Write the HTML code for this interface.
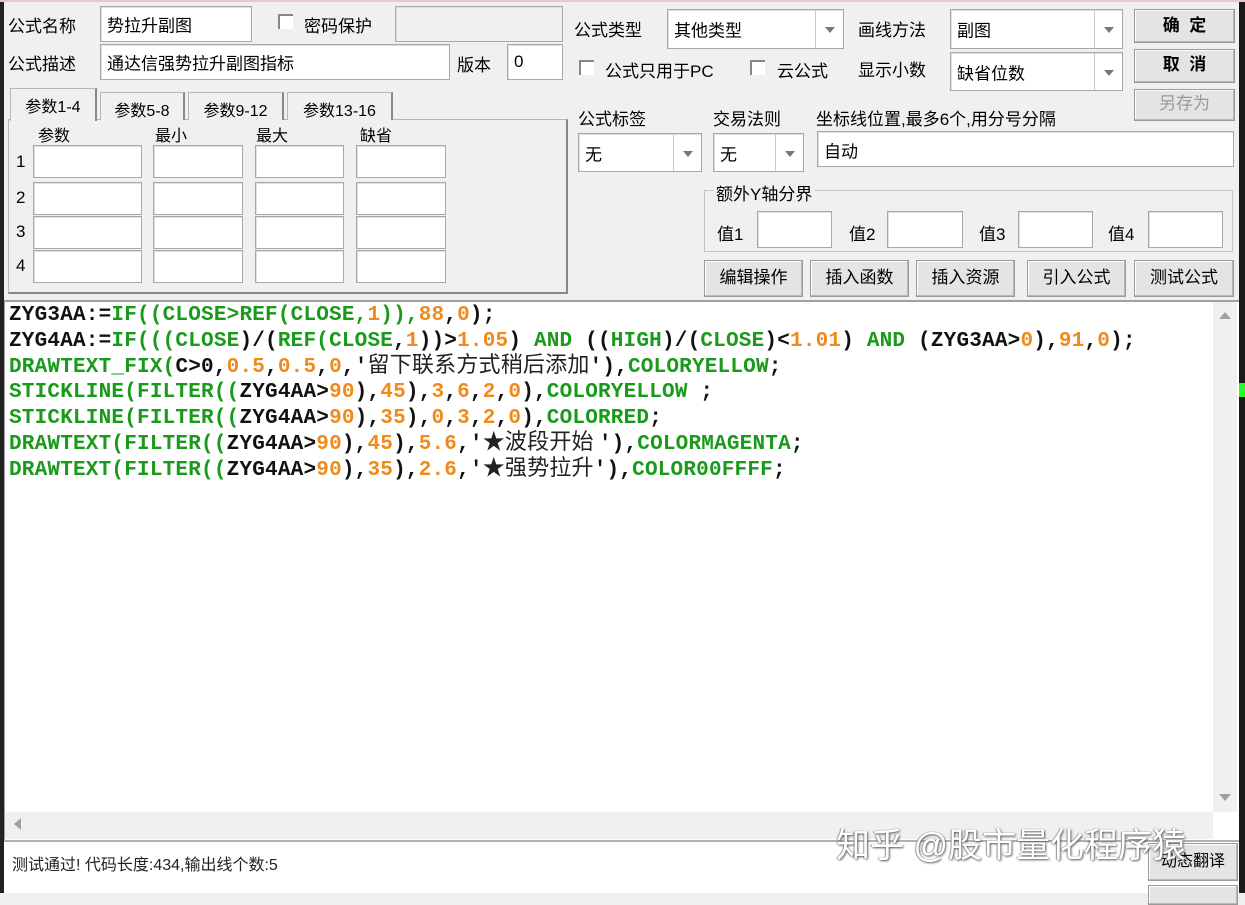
<!DOCTYPE html>
<html><head><meta charset="utf-8">
<style>
*{margin:0;padding:0;box-sizing:border-box}
body{width:1245px;height:893px;background:#f0f0f0;position:relative;overflow:hidden;font-family:"Liberation Sans","Noto Sans CJK SC",sans-serif;font-size:17px;color:#000}
.a{position:absolute;white-space:nowrap}
.in{position:absolute;background:#fff;border:1px solid #a8a8a8;box-shadow:inset 1px 1px 0 #e0e0e0}
.in span{position:absolute;left:6px;top:50%;transform:translateY(-50%);font-size:17px}
.sel .arr{position:absolute;right:0;top:0;bottom:0;width:28px;border-left:1px solid #c8c8c8}
.sel .arr:after{content:"";position:absolute;left:9px;top:50%;margin-top:-2px;border:5px solid transparent;border-top:6px solid #777;border-bottom:0}
.cb{position:absolute;width:15px;height:15px;border-left:2px solid #888;border-top:2px solid #888;background:#fff}
.btn{position:absolute;background:#e4e4e4;border:1px solid #9a9a9a;box-shadow:inset -1px -1px 0 #b8b8b8,inset 1px 1px 0 #fff;text-align:center;font-size:17px}
.tab{position:absolute;top:92px;height:28px;border:1px solid #b8b8b8;border-bottom:none;background:#f0f0f0;font-size:16px;text-align:center;padding-top:4px}
#code{position:absolute;left:9px;top:303px;font-family:"Liberation Mono",monospace;font-weight:bold;font-size:21px;color:#111;white-space:pre;letter-spacing:0.2px}
#code div{height:25.8px;line-height:25.8px}
#code span{line-height:0}
.g{color:#1a9a1a}.o{color:#f08a1a}.c{font-weight:normal;font-family:"Noto Sans CJK SC",sans-serif;font-size:22px;color:#222}
</style></head><body>
<div class="a" style="left:0;top:0;width:4px;height:893px;background:#222"></div>
<div class="a" style="left:1239px;top:0;width:6px;height:893px;background:#1a1a1a"></div>
<div class="a" style="left:1239px;top:383px;width:6px;height:14px;background:#2f2"></div>
<div class="a" style="left:0;top:0;width:1245px;height:2px;background:#e8c8c8"></div>

<div class="a" style="left:8px;top:12px">公式名称</div>
<div class="in" style="left:100px;top:6px;width:152px;height:36px"><span>势拉升副图</span></div>
<div class="cb" style="left:278px;top:14px"></div>
<div class="a" style="left:304px;top:12px">密码保护</div>
<div class="in" style="left:395px;top:6px;width:168px;height:36px;background:#f0f0f0"></div>
<div class="a" style="left:8px;top:50px">公式描述</div>
<div class="in" style="left:100px;top:44px;width:350px;height:36px"><span>通达信强势拉升副图指标</span></div>
<div class="a" style="left:457px;top:51px">版本</div>
<div class="in" style="left:507px;top:44px;width:56px;height:36px"><span>0</span></div>

<div class="a" style="left:8px;top:119px;width:560px;height:175px;border:1px solid #b8b8b8;border-right:2px solid #888;border-bottom:2px solid #888"></div>
<div class="tab" style="left:10px;top:88px;height:33px;width:87px;border-right:2px solid #888">参数1-4</div>
<div class="tab" style="left:100px;width:85px;border-right:2px solid #888">参数5-8</div>
<div class="tab" style="left:188px;width:96px;border-right:2px solid #888">参数9-12</div>
<div class="tab" style="left:287px;width:106px;border-right:2px solid #888">参数13-16</div>
<div class="a" style="left:38px;top:122px;font-size:16px">参数</div>
<div class="a" style="left:155px;top:122px;font-size:16px">最小</div>
<div class="a" style="left:256px;top:122px;font-size:16px">最大</div>
<div class="a" style="left:360px;top:122px;font-size:16px">缺省</div>
<div class="a" style="left:16px;top:152px">1</div>
<div class="a" style="left:16px;top:188px">2</div>
<div class="a" style="left:16px;top:222px">3</div>
<div class="a" style="left:16px;top:256px">4</div>
<div class="in" style="left:33px;top:145px;width:109px;height:33px"></div><div class="in" style="left:153px;top:145px;width:90px;height:33px"></div><div class="in" style="left:255px;top:145px;width:89px;height:33px"></div><div class="in" style="left:356px;top:145px;width:90px;height:33px"></div>
<div class="in" style="left:33px;top:182px;width:109px;height:33px"></div><div class="in" style="left:153px;top:182px;width:90px;height:33px"></div><div class="in" style="left:255px;top:182px;width:89px;height:33px"></div><div class="in" style="left:356px;top:182px;width:90px;height:33px"></div>
<div class="in" style="left:33px;top:216px;width:109px;height:33px"></div><div class="in" style="left:153px;top:216px;width:90px;height:33px"></div><div class="in" style="left:255px;top:216px;width:89px;height:33px"></div><div class="in" style="left:356px;top:216px;width:90px;height:33px"></div>
<div class="in" style="left:33px;top:250px;width:109px;height:33px"></div><div class="in" style="left:153px;top:250px;width:90px;height:33px"></div><div class="in" style="left:255px;top:250px;width:89px;height:33px"></div><div class="in" style="left:356px;top:250px;width:90px;height:33px"></div>

<div class="a" style="left:574px;top:16px">公式类型</div>
<div class="in sel" style="left:667px;top:9px;width:177px;height:40px"><span>其他类型</span><div class="arr"></div></div>
<div class="a" style="left:858px;top:16px">画线方法</div>
<div class="in sel" style="left:950px;top:9px;width:173px;height:40px"><span>副图</span><div class="arr"></div></div>
<div class="btn" style="left:1134px;top:9px;width:101px;height:34px;line-height:32px;font-weight:bold">确&nbsp;&nbsp;定</div>
<div class="btn" style="left:1134px;top:49px;width:101px;height:34px;line-height:30px;font-weight:bold">取&nbsp;&nbsp;消</div>
<div class="btn" style="left:1134px;top:89px;width:101px;height:32px;line-height:28px;color:#999">另存为</div>
<div class="cb" style="left:579px;top:60px"></div>
<div class="a" style="left:605px;top:57px">公式只用于PC</div>
<div class="cb" style="left:750px;top:60px"></div>
<div class="a" style="left:777px;top:57px">云公式</div>
<div class="a" style="left:858px;top:56px">显示小数</div>
<div class="in sel" style="left:950px;top:52px;width:173px;height:39px"><span>缺省位数</span><div class="arr"></div></div>
<div class="a" style="left:578px;top:105px">公式标签</div>
<div class="a" style="left:713px;top:105px">交易法则</div>
<div class="a" style="left:816px;top:105px">坐标线位置,最多6个,用分号分隔</div>
<div class="in sel" style="left:578px;top:133px;width:124px;height:39px"><span>无</span><div class="arr"></div></div>
<div class="in sel" style="left:713px;top:133px;width:91px;height:39px"><span>无</span><div class="arr"></div></div>
<div class="in" style="left:817px;top:131px;width:417px;height:36px"><span style="top:18px">自动</span></div>
<div class="a" style="left:704px;top:190px;width:529px;height:62px;border:1px solid #c4c4c4"></div>
<div class="a" style="left:713px;top:180px;background:#f0f0f0;padding:0 3px">额外Y轴分界</div>
<div class="a" style="left:717px;top:220px">值1</div><div class="in" style="left:757px;top:211px;width:75px;height:37px"></div>
<div class="a" style="left:849px;top:220px">值2</div><div class="in" style="left:887px;top:211px;width:76px;height:37px"></div>
<div class="a" style="left:979px;top:220px">值3</div><div class="in" style="left:1018px;top:211px;width:75px;height:37px"></div>
<div class="a" style="left:1108px;top:220px">值4</div><div class="in" style="left:1148px;top:211px;width:75px;height:37px"></div>
<div class="btn" style="left:704px;top:260px;width:99px;height:37px;line-height:34px">编辑操作</div>
<div class="btn" style="left:810px;top:260px;width:99px;height:37px;line-height:34px">插入函数</div>
<div class="btn" style="left:916px;top:260px;width:99px;height:37px;line-height:34px">插入资源</div>
<div class="btn" style="left:1027px;top:260px;width:99px;height:37px;line-height:34px">引入公式</div>
<div class="btn" style="left:1134px;top:260px;width:100px;height:37px;line-height:34px">测试公式</div>

<div class="a" style="left:4px;top:300px;width:1235px;height:541px;background:#fff;border-top:2px solid #a0a0a0;border-left:1px solid #a0a0a0"></div>
<div class="a" style="left:1213px;top:302px;width:24px;height:510px;background:#f0f0f0"></div>
<div class="a" style="left:1219px;top:312px;border:6px solid transparent;border-bottom:7px solid #a0a0a0;border-top:0"></div>
<div class="a" style="left:1219px;top:794px;border:6px solid transparent;border-top:7px solid #a0a0a0;border-bottom:0"></div>
<div class="a" style="left:5px;top:812px;width:1208px;height:27px;background:#f0f0f0"></div>
<div class="a" style="left:14px;top:818px;border:6px solid transparent;border-right:7px solid #a0a0a0;border-left:0"></div>
<div class="a" style="left:4px;top:840px;width:1235px;height:53px;background:#fff;border-top:2px solid #b0b0b0"></div>
<div class="a" style="left:12px;top:851px;font-size:16px;color:#222">测试通过! 代码长度:434,输出线个数:5</div>
<div class="btn" style="left:1148px;top:843px;width:90px;height:38px;line-height:36px;font-size:16px">动态翻译</div>
<div class="btn" style="left:1148px;top:885px;width:90px;height:20px"></div>
<div class="a" style="left:836px;top:818px;font-size:34px;color:#fff;text-shadow:1px 1px 2px #555,-1px 0 1px #999">知乎 @股市量化程序猿</div>

<div id="code"><div>ZYG3AA:=<span class="g">IF((CLOSE&gt;REF(CLOSE,</span><span class="o">1</span><span class="g">)),</span><span class="o">88</span>,<span class="o">0</span>);</div><div>ZYG4AA:=<span class="g">IF(((CLOSE</span>)/(<span class="g">REF(CLOSE</span>,<span class="o">1</span>))&gt;<span class="o">1.05</span>) <span class="g">AND</span> ((<span class="g">HIGH</span>)/(<span class="g">CLOSE</span>)&lt;<span class="o">1.01</span>) <span class="g">AND</span> (ZYG3AA&gt;<span class="o">0</span>),<span class="o">91</span>,<span class="o">0</span>);</div><div><span class="g">DRAWTEXT_FIX(</span>C&gt;0,<span class="o">0.5</span>,<span class="o">0.5</span>,<span class="o">0</span>,'<span class="c">留下联系方式稍后添加</span>'),<span class="g">COLORYELLOW</span>;</div><div><span class="g">STICKLINE(FILTER((</span>ZYG4AA&gt;<span class="o">90</span>),<span class="o">45</span>),<span class="o">3</span>,<span class="o">6</span>,<span class="o">2</span>,<span class="o">0</span>),<span class="g">COLORYELLOW</span> ;</div><div><span class="g">STICKLINE(FILTER((</span>ZYG4AA&gt;<span class="o">90</span>),<span class="o">35</span>),<span class="o">0</span>,<span class="o">3</span>,<span class="o">2</span>,<span class="o">0</span>),<span class="g">COLORRED</span>;</div><div><span class="g">DRAWTEXT(FILTER((</span>ZYG4AA&gt;<span class="o">90</span>),<span class="o">45</span>),<span class="o">5.6</span>,'<span class="c">★波段开始 </span>'),<span class="g">COLORMAGENTA</span>;</div><div><span class="g">DRAWTEXT(FILTER((</span>ZYG4AA&gt;<span class="o">90</span>),<span class="o">35</span>),<span class="o">2.6</span>,'<span class="c">★强势拉升</span>'),<span class="g">COLOR00FFFF</span>;</div></div>
</body></html>
